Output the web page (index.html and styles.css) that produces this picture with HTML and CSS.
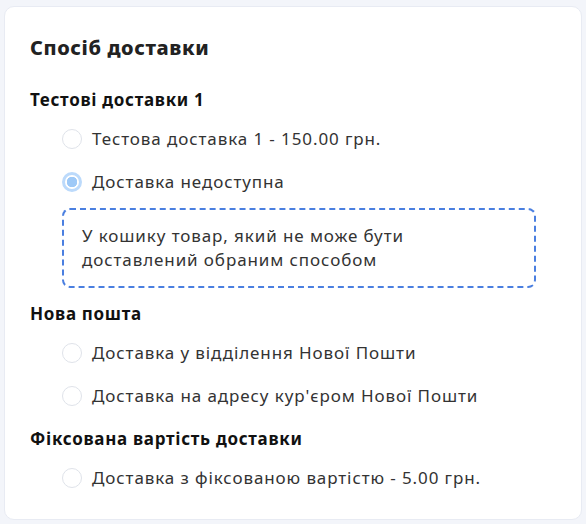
FILE: index.html
```html
<!DOCTYPE html>
<html lang="uk">
<head>
<meta charset="utf-8">
<link rel="stylesheet" href="styles.css">
</head>
<body>
<div class="card">
  <h2 class="title">Спосіб доставки</h2>
  <div class="group group-first">
    <h3 class="group-title">Тестові доставки 1</h3>
    <label class="option"><span class="radio"></span><span class="label">Тестова доставка 1 - 150.00 грн.</span></label>
    <label class="option"><span class="radio checked"></span><span class="label">Доставка недоступна</span></label>
    <div class="notice">У кошику товар, який не може бути доставлений обраним способом</div>
  </div>
  <div class="group">
    <h3 class="group-title">Нова пошта</h3>
    <label class="option"><span class="radio"></span><span class="label">Доставка у відділення Нової Пошти</span></label>
    <label class="option"><span class="radio"></span><span class="label">Доставка на адресу кур'єром Нової Пошти</span></label>
  </div>
  <div class="group group-last">
    <h3 class="group-title">Фіксована вартість доставки</h3>
    <label class="option"><span class="radio"></span><span class="label">Доставка з фіксованою вартістю - 5.00 грн.</span></label>
  </div>
</div>
</body>
</html>
```
FILE: styles.css
```css
html, body {
  margin: 0;
  padding: 0;
  background: #f3f5fa;
}
body {
  padding: 6px 4px 4px 4px;
  font-family: "Noto Sans", "Open Sans", sans-serif;
  color: #2b2b2b;
}
.card {
  background: #fff;
  border: 1px solid #e8ebf3;
  border-radius: 10px;
  padding: 26px 25px 26px 25px;
  height: 514px;
  box-sizing: border-box;
}
.title {
  margin: 0 0 25px 0;
  font-size: 20px;
  font-weight: 800;
  letter-spacing: 0.6px;
  line-height: 30px;
  color: #222;
}
.group-title {
  margin: 0 0 5px 0;
  font-size: 17px;
  font-weight: 700;
  letter-spacing: 0.7px;
  line-height: 24px;
  color: #111;
}
.group {
  margin-bottom: 10px;
}
.option {
  display: flex;
  align-items: center;
  gap: 10px;
  margin-left: 32px;
  height: 43px;
}
.radio {
  width: 20px;
  height: 20px;
  border-radius: 50%;
  border: 1.5px solid #dfe3ea;
  box-sizing: border-box;
  flex: none;
  background: #fff;
}
.radio.checked {
  border: 3px solid #bcdafb;
  background: radial-gradient(circle, #9ec9f7 0 5px, #fff 5.5px);
}
.label {
  font-size: 17px;
  letter-spacing: 0.9px;
  color: #333;
}
.notice {
  margin: 5px 20px 14px 32px;
  border: 2px dashed #4a7fe0;
  border-radius: 8px;
  padding: 14px 40px 14px 18px;
  font-size: 17px;
  letter-spacing: 0.9px;
  line-height: 24px;
  color: #333;
}
```
